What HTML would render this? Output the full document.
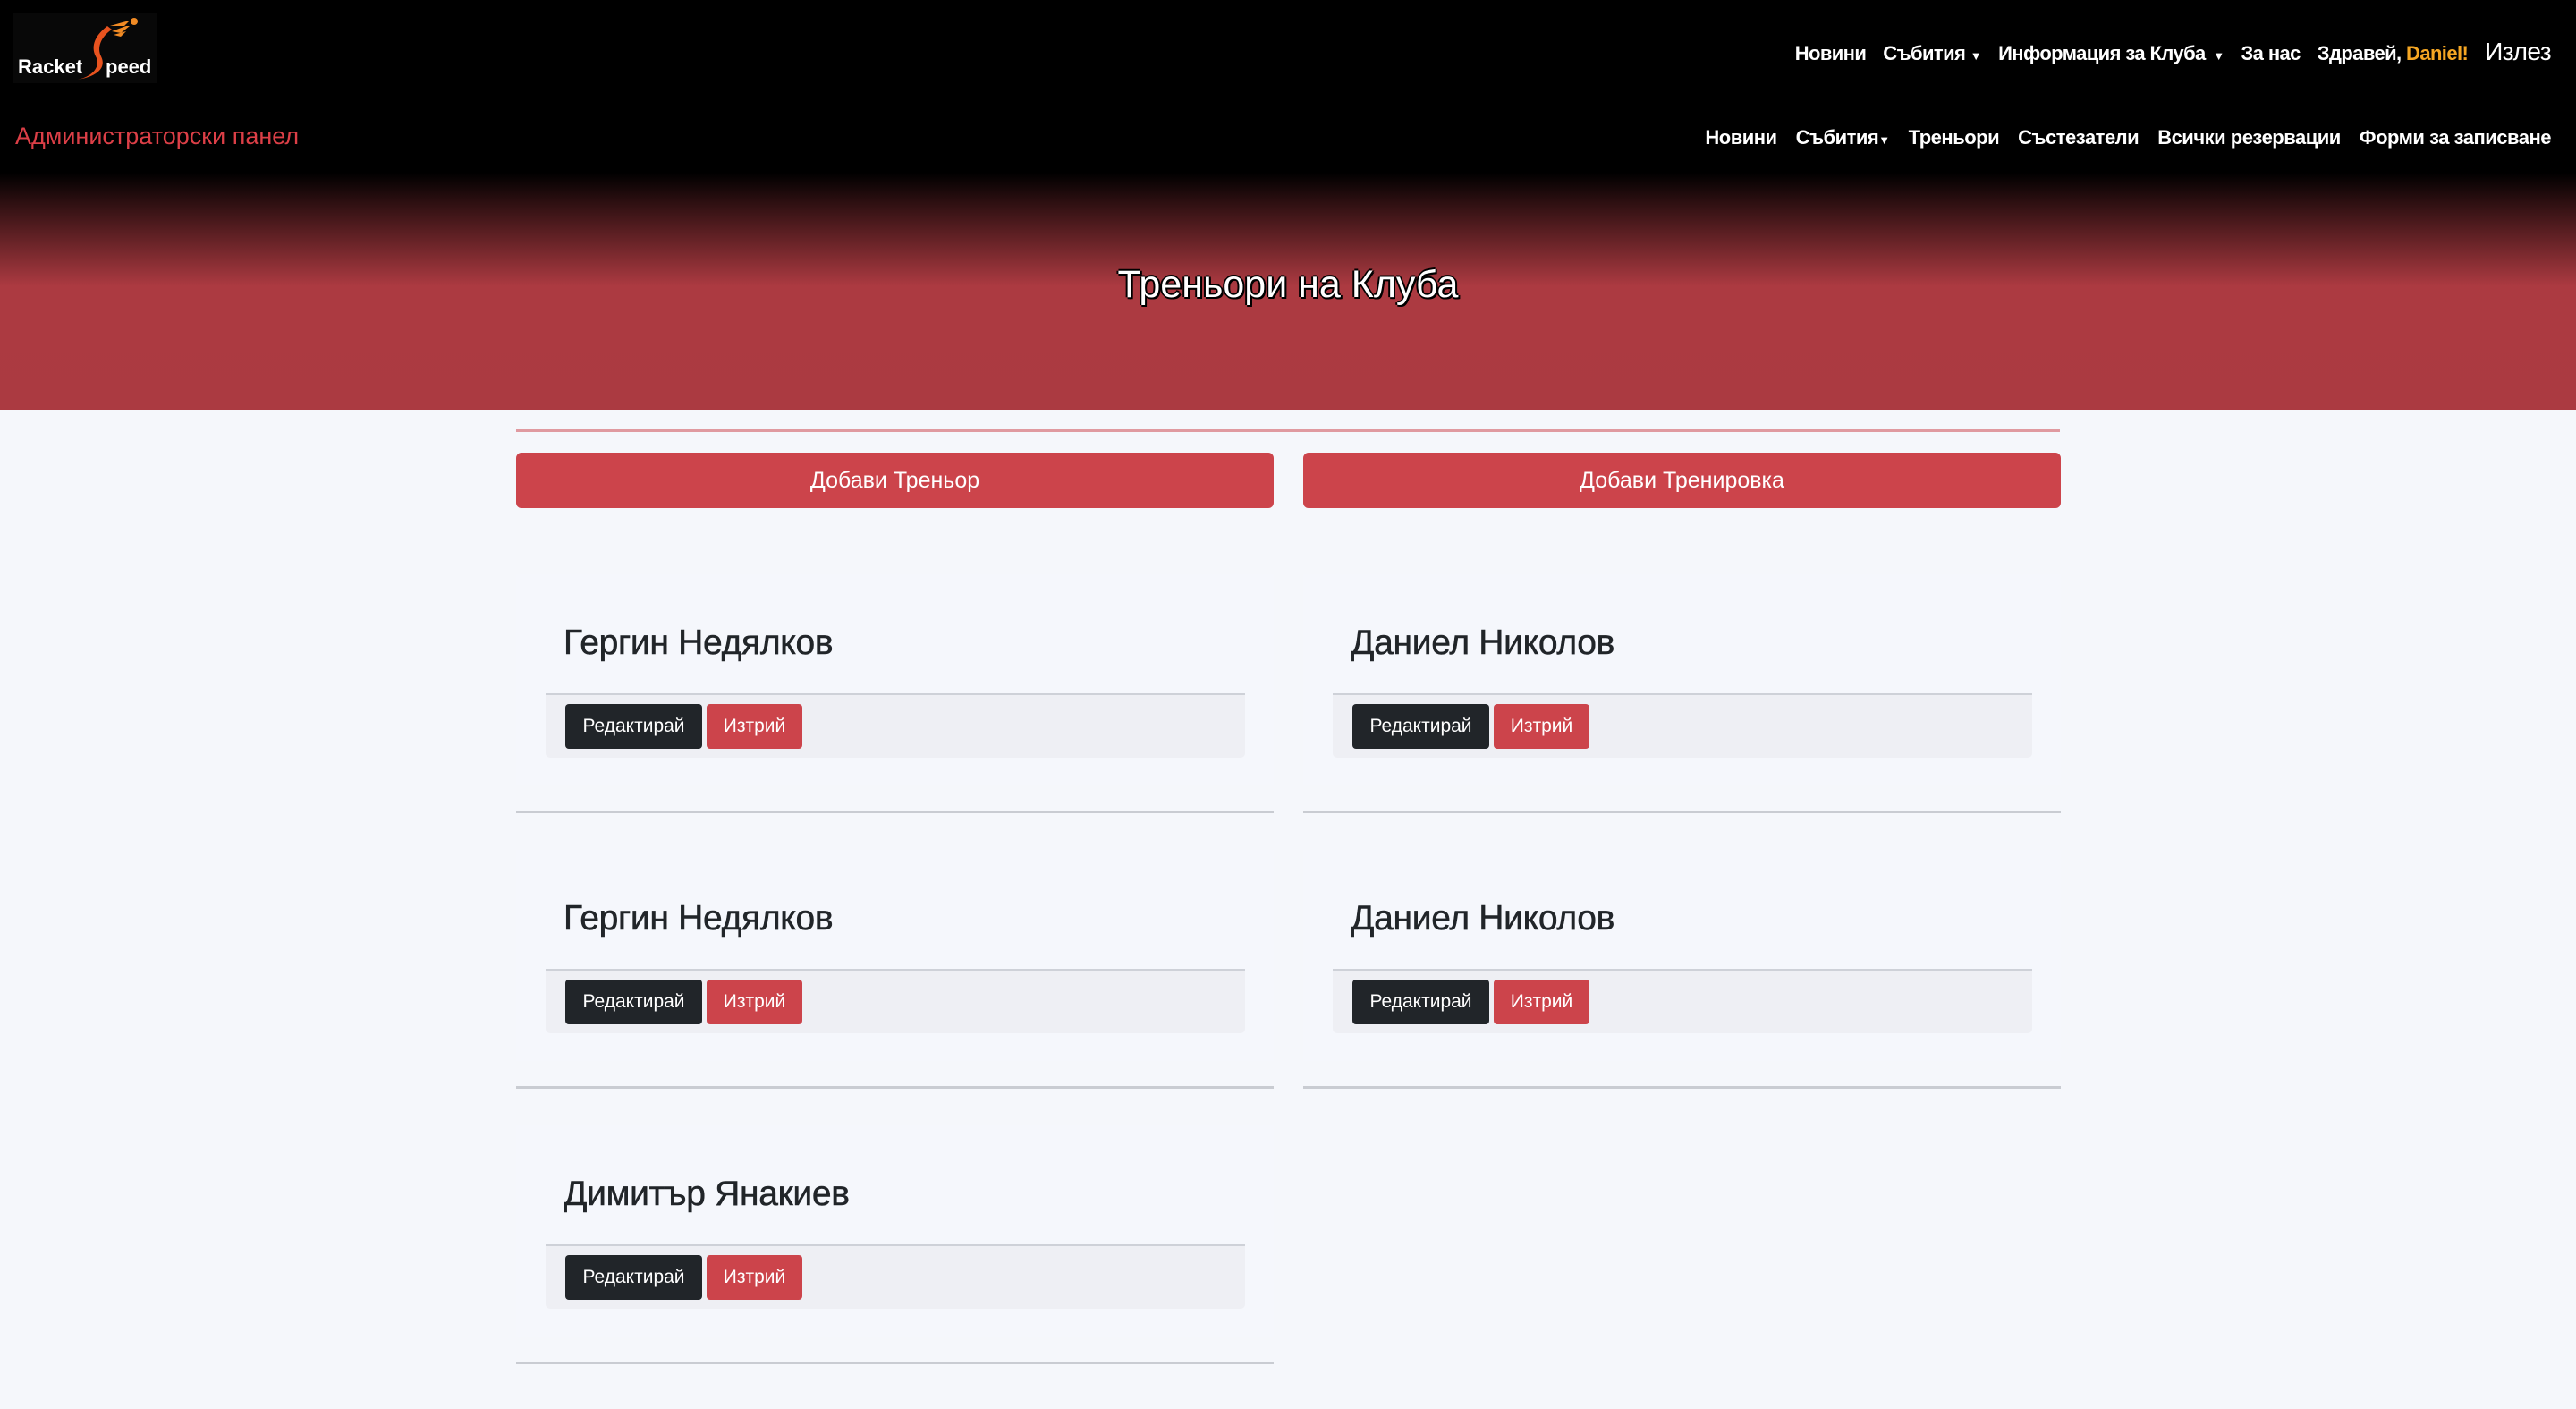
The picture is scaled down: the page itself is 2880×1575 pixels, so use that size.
<!DOCTYPE html>
<html><head><meta charset="utf-8"><style>
*{margin:0;padding:0;box-sizing:border-box}
body{width:2880px;height:1575px;background:#f5f7fb;font-family:"Liberation Sans","DejaVu Sans",sans-serif;position:relative;overflow:hidden}
.hdr{position:absolute;left:0;top:0;width:2880px;height:458px;background:linear-gradient(to bottom,#000 0,#000 193px,#ac3a41 320px,#ab3a41 458px)}
.a{position:absolute;white-space:nowrap}
.nav{color:#fff;font-size:22px;font-weight:bold;letter-spacing:-0.3px}
.logo{position:absolute;left:15px;top:15px;width:161px;height:78px;background:#080808}
.btn{position:absolute;background:#cc444b;color:#fff;border-radius:6px;font-size:25px;display:flex;align-items:center;justify-content:center;height:62px;top:506px;width:847px}
.card{position:absolute;width:847px;height:236px;background:#f5f7fc}
.card h2{position:absolute;left:53px;top:55px;font-size:39px;font-weight:normal;color:#212529;letter-spacing:-0.3px;-webkit-text-stroke:0.5px #212529}
.ft{position:absolute;left:33px;top:133px;width:782px;height:72px;background:#eeeff4;border-top:2px solid #ced1d8;border-radius:0 0 5px 5px}
.b{position:absolute;top:10px;height:50px;border-radius:4px;color:#fff;font-size:21px;display:flex;align-items:center;justify-content:center}
.e{left:22px;width:153px;background:#212529}
.d{left:180px;width:107px;background:#cc444b}
.sep{position:absolute;width:847px;height:3px;background:#c9ccd2}
</style></head><body>
<div class="hdr"></div>
<div class="logo">
<svg width="161" height="78" viewBox="0 0 161 78">
<path d="M105 14 C92 24 86 36 92 48 C98 58 90 70 72 74 C95 70 104 60 98 48 C93 38 98 26 110 18 Z" fill="#e8531f"/>
<path d="M108 14 l14 -4 l8 -2 l-6 6 z M110 20 l16 -6 l4 0 l-10 8 z M112 24 l14 -4 l-6 6 z" fill="#f08a24"/>
<circle cx="135" cy="9" r="4" fill="#f08a24"/>
<text x="5" y="67" fill="#fff" font-family="Liberation Sans,sans-serif" font-size="22" font-weight="bold">Racket</text>
<text x="103" y="67" fill="#fff" font-family="Liberation Sans,sans-serif" font-size="22" font-weight="bold">peed</text>
</svg></div>
<div class="a" style="left:17px;top:137px;font-size:27px;color:#dc3f47">Администраторски панел</div>
<div class="a nav" style="right:28px;top:42px;display:flex;gap:19px;align-items:baseline;letter-spacing:-0.6px">
<span>Новини</span><span>Събития <span style="font-size:13px">▼</span></span><span>Информация за Клуба <span style="font-size:13px">&nbsp;▼</span></span><span>За нас</span><span>Здравей, <span style="color:#f5a623">Daniel!</span></span><span style="font-weight:normal;font-size:28px">Излез</span></div>
<div class="a nav" style="right:28px;top:141px;display:flex;gap:21px;letter-spacing:-0.5px">
<span>Новини</span><span>Събития<span style="font-size:13px">▼</span></span><span>Треньори</span><span>Състезатели</span><span>Всички резервации</span><span>Форми за записване</span></div>
<div class="a" style="left:0;width:2880px;top:294px;text-align:center;color:#fff;font-size:43px;text-shadow:-2px 0 #000,2px 0 #000,0 -2px #000,0 2px #000,2px 2px #000">Треньори на Клуба</div>
<div class="a" style="left:577px;top:479px;width:1726px;height:4px;background:#e09aa0"></div>
<div class="btn" style="left:577px">Добави Треньор</div>
<div class="btn" style="left:1457px">Добави Тренировка</div>

<div class="card" style="left:577px;top:642px"><h2>Гергин Недялков</h2><div class="ft"><div class="b e">Редактирай</div><div class="b d">Изтрий</div></div></div>
<div class="sep" style="left:577px;top:906px"></div>
<div class="card" style="left:1457px;top:642px"><h2>Даниел Николов</h2><div class="ft"><div class="b e">Редактирай</div><div class="b d">Изтрий</div></div></div>
<div class="sep" style="left:1457px;top:906px"></div>

<div class="card" style="left:577px;top:950px"><h2>Гергин Недялков</h2><div class="ft"><div class="b e">Редактирай</div><div class="b d">Изтрий</div></div></div>
<div class="sep" style="left:577px;top:1214px"></div>
<div class="card" style="left:1457px;top:950px"><h2>Даниел Николов</h2><div class="ft"><div class="b e">Редактирай</div><div class="b d">Изтрий</div></div></div>
<div class="sep" style="left:1457px;top:1214px"></div>

<div class="card" style="left:577px;top:1258px"><h2>Димитър Янакиев</h2><div class="ft"><div class="b e">Редактирай</div><div class="b d">Изтрий</div></div></div>
<div class="sep" style="left:577px;top:1522px"></div>
</body></html>
